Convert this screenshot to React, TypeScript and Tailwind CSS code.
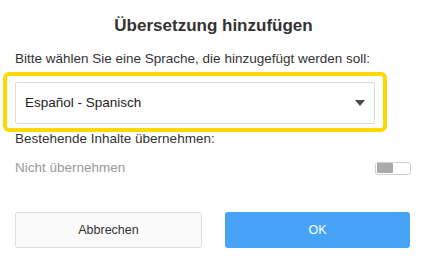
export default function App() {
  return (
    <div
      className="w-[427px] h-[265px] bg-white px-[15px] pt-[16px] text-[#333]"
      style={{ fontFamily: '"Liberation Sans", Arial, sans-serif' }}
    >
      {/* Title */}
      <h2 className="text-center text-[17px] leading-[20px] font-bold text-[#333]">
        Übersetzung hinzufügen
      </h2>

      {/* Language select */}
      <p className="mt-[15px] text-[13.5px] leading-[16px] text-[#333]">
        Bitte wählen Sie eine Sprache, die hinzugefügt werden soll:
      </p>
      <div className="relative mt-[15px] w-[360px]">
        <div className="absolute -left-[12px] -right-[12px] -top-[10px] -bottom-[8px] rounded-[6px] border-[4.5px] border-[#ffd800] pointer-events-none" />
        <div className="flex h-[42px] items-center justify-between rounded-[2px] border border-[#dcdcdc] bg-white pl-[9px] pr-[9px]">
          <span className="text-[13.5px] text-[#222]">Español - Spanisch</span>
          <svg width="10" height="6" viewBox="0 0 10 6">
            <polygon points="0,0 10,0 5,6" fill="#4a4a4a" />
          </svg>
        </div>
      </div>

      {/* Existing content */}
      <p className="mt-[7px] text-[13.5px] leading-[16px] text-[#333]">
        Bestehende Inhalte übernehmen:
      </p>
      <div className="mt-[13px] flex items-center justify-between pr-[1px]">
        <span className="text-[13.5px] leading-[16px] text-[#999]">Nicht übernehmen</span>
        <div className="flex h-[13px] w-[36px] items-center rounded-[3px] border border-[#cfcfcf] bg-white px-[1px]">
          <div className="h-[10px] w-[16px] rounded-[1px] bg-[#aaaaaa]" />
        </div>
      </div>

      {/* Buttons */}
      <div className="mt-[36px] flex gap-[23px] pr-[2px]">
        <button className="h-[36px] flex-1 rounded-[3px] border border-[#dedede] bg-[#fafafa] text-[12.5px] text-[#333]">
          Abbrechen
        </button>
        <button className="h-[36px] flex-1 rounded-[3px] bg-[#46a3f5] text-[12.5px] text-white">
          OK
        </button>
      </div>
    </div>
  );
}
